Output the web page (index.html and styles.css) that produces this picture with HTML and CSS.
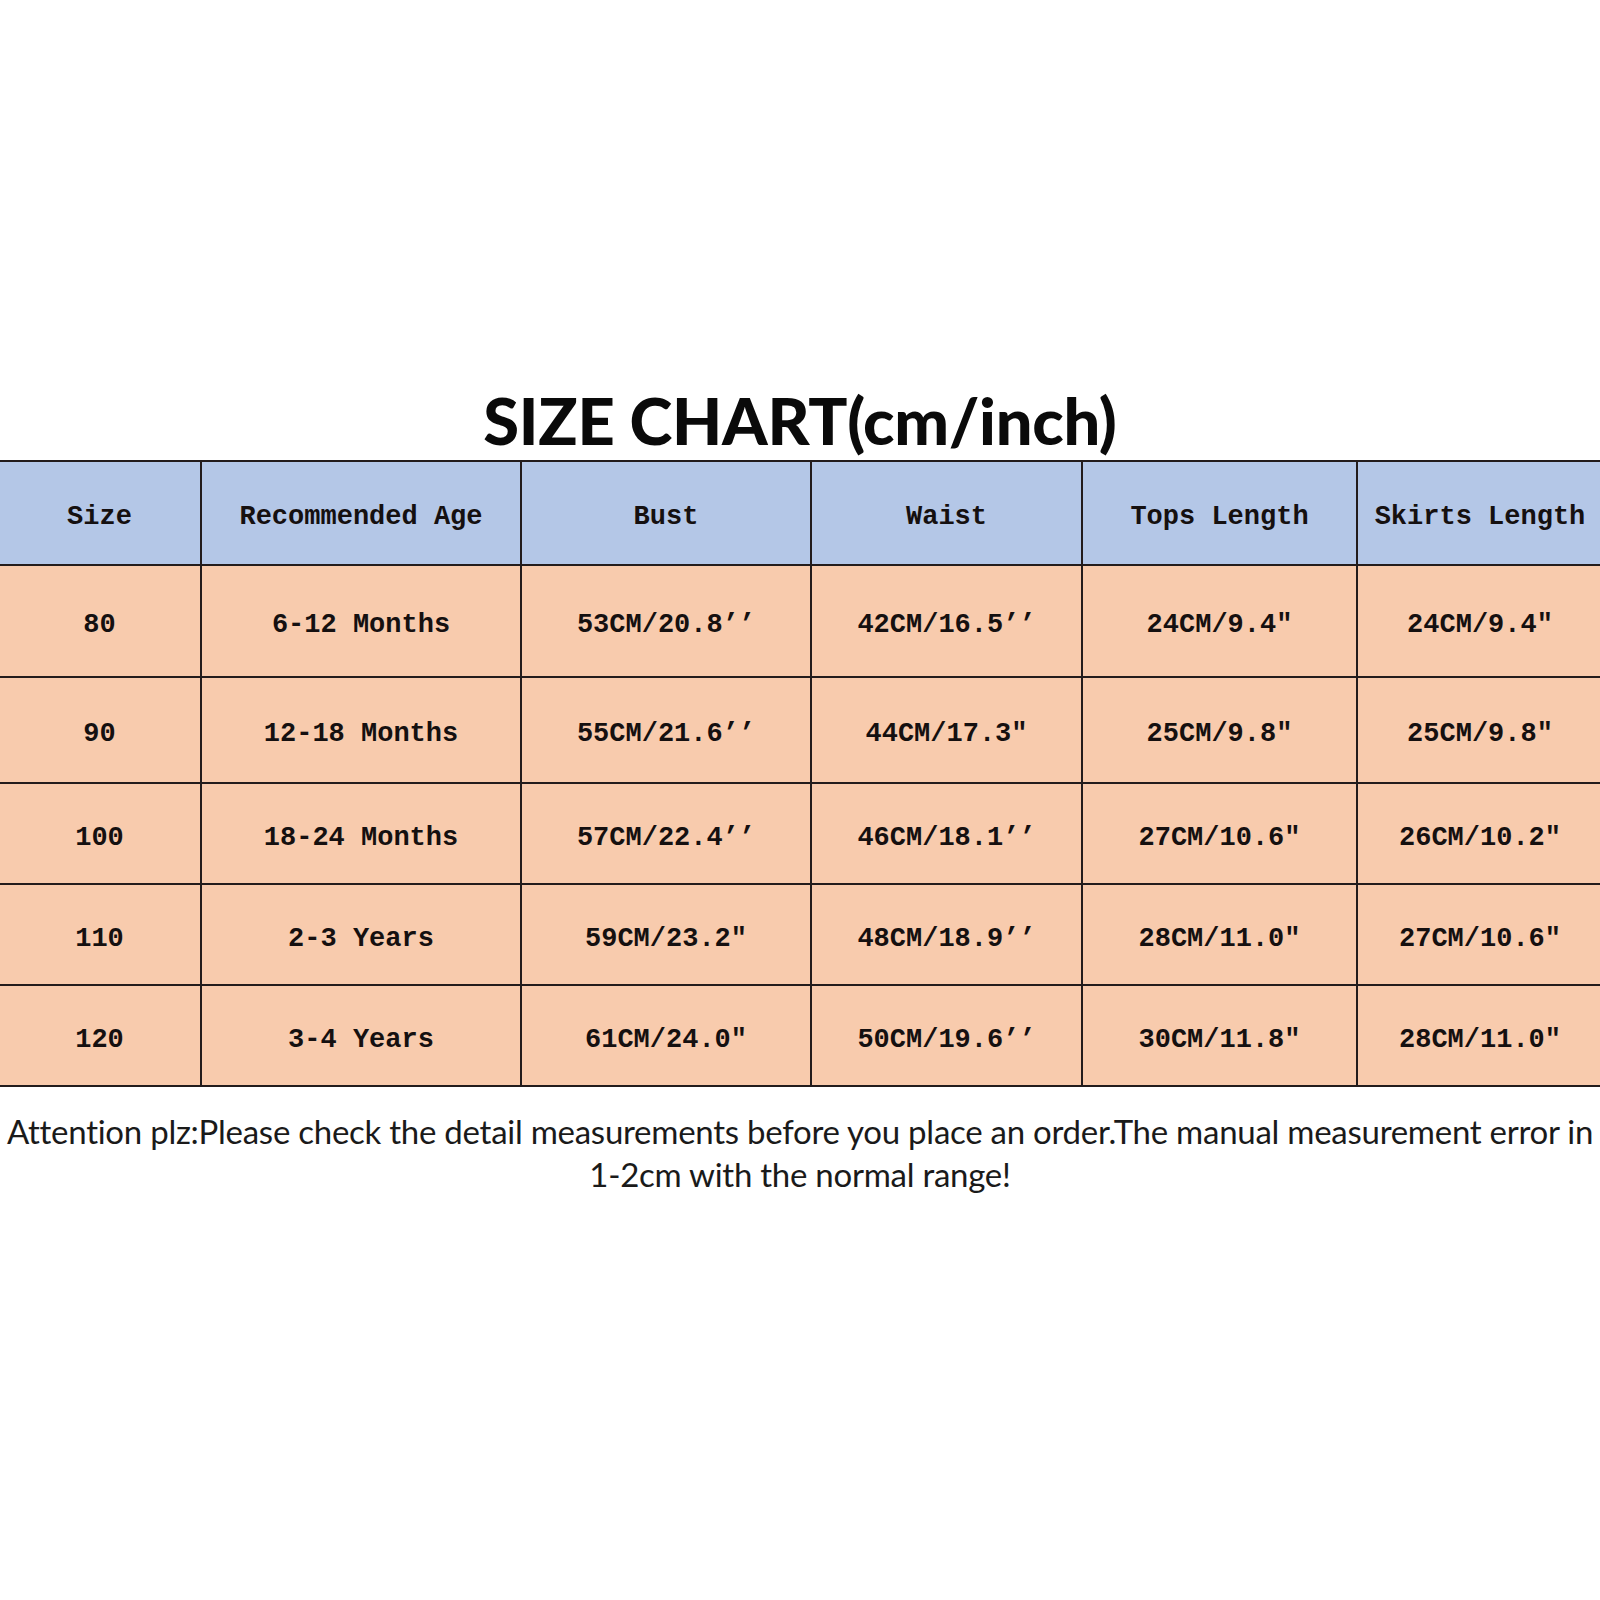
FILE: index.html
```html
<!DOCTYPE html>
<html>
<head>
<meta charset="utf-8">
<link rel="stylesheet" href="styles.css">
</head>
<body>
<div class="page">
  <h1 class="title">SIZE CHART<span class="unit">(cm/inch)</span></h1>
  <div class="chart">
    <div class="cell head">Size</div>
    <div class="cell head">Recommended Age</div>
    <div class="cell head">Bust</div>
    <div class="cell head">Waist</div>
    <div class="cell head">Tops Length</div>
    <div class="cell head">Skirts Length</div>

    <div class="cell">80</div>
    <div class="cell">6-12 Months</div>
    <div class="cell">53CM/20.8’’</div>
    <div class="cell">42CM/16.5’’</div>
    <div class="cell">24CM/9.4″</div>
    <div class="cell">24CM/9.4″</div>

    <div class="cell">90</div>
    <div class="cell">12-18 Months</div>
    <div class="cell">55CM/21.6’’</div>
    <div class="cell">44CM/17.3″</div>
    <div class="cell">25CM/9.8″</div>
    <div class="cell">25CM/9.8″</div>

    <div class="cell">100</div>
    <div class="cell">18-24 Months</div>
    <div class="cell">57CM/22.4’’</div>
    <div class="cell">46CM/18.1’’</div>
    <div class="cell">27CM/10.6″</div>
    <div class="cell">26CM/10.2″</div>

    <div class="cell">110</div>
    <div class="cell">2-3 Years</div>
    <div class="cell">59CM/23.2″</div>
    <div class="cell">48CM/18.9’’</div>
    <div class="cell">28CM/11.0″</div>
    <div class="cell">27CM/10.6″</div>

    <div class="cell">120</div>
    <div class="cell">3-4 Years</div>
    <div class="cell">61CM/24.0″</div>
    <div class="cell">50CM/19.6’’</div>
    <div class="cell">30CM/11.8″</div>
    <div class="cell">28CM/11.0″</div>
  </div>
  <p class="note">Attention plz:Please check the detail measurements before you place an order.The manual measurement error in<br>1-2cm with the normal range!</p>
</div>
</body>
</html>
```

FILE: styles.css
```css
html, body {
  margin: 0;
  padding: 0;
  background: #ffffff;
}

.page {
  width: 1600px;
  height: 1600px;
  overflow: hidden;
  padding-top: 384px;
  box-sizing: border-box;
}

.title {
  margin: 0;
  height: 76px;
  text-align: center;
  font-family: "Lato", sans-serif;
  font-weight: 900;
  font-size: 65px;
  line-height: 72px;
  color: #0a0a0a;
  letter-spacing: -0.3px;
}

.chart {
  margin-left: -3px;
  width: 1607px;
  display: grid;
  grid-template-columns: 201px 318px 288px 269px 273px 244px;
  grid-template-rows: 102px 110px 104px 99px 99px 99px;
  gap: 2px;
  padding: 2px;
  box-sizing: border-box;
  background: #231c1c;
}

.cell {
  background: #f8cbad;
  display: flex;
  align-items: center;
  justify-content: center;
  padding-top: 8px;
  box-sizing: border-box;
  font-family: "Liberation Mono", "Courier New", monospace;
  font-weight: bold;
  font-size: 27px;
  color: #151010;
  white-space: nowrap;
}

.cell.head {
  background: #b4c7e7;
}

.note {
  margin: 23px 0 0;
  text-align: center;
  font-family: "Lato", sans-serif;
  font-size: 33px;
  line-height: 43px;
  letter-spacing: -0.26px;
  color: #1a1a1a;
  white-space: nowrap;
}
```
